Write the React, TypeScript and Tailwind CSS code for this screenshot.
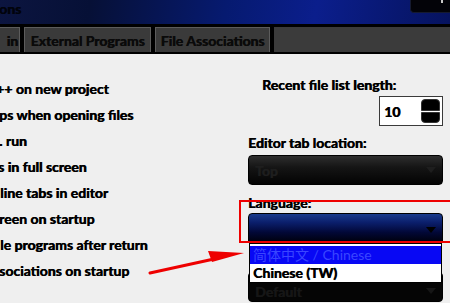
import React from "react";

const OPTIONS = [
  { text: "++ on new project", shift: "-ml-[4px]" },
  { text: "ps when opening files", shift: "-ml-[1px]" },
  { text: ". run", shift: "-ml-[1px]" },
  { text: "s in full screen", shift: "-ml-[2px]" },
  { text: "line tabs in editor", shift: "ml-0" },
  { text: "reen on startup", shift: "-ml-[1px]" },
  { text: "le programs after return", shift: "ml-0" },
  { text: "sociations on startup", shift: "-ml-[1px]" },
];

const heavy = "text-[14px] font-bold [text-shadow:0.6px_0_0_currentColor]";

function Arrow({ className }: { className?: string }) {
  return (
    <svg width="10" height="6" viewBox="0 0 10 6" className={className}>
      <path d="M0 0 L10 0 L5 6 Z" fill="currentColor" />
    </svg>
  );
}

export default function App() {
  return (
    <div className="relative w-[450px] h-[303px] overflow-hidden bg-[#efefef] text-black flex flex-col font-['Lato','Noto_Sans_CJK_SC',sans-serif]">
      {/* title bar */}
      <div className="relative h-[24px] shrink-0 bg-[linear-gradient(100deg,#0c1540_0%,#061036_20%,#061a70_50%,#0b1e8c_70%,#06135e_100%)]">
        <span className={`absolute -left-[1px] -top-[2px] text-[#01030c] ${heavy}`}>ons</span>
        <div className="absolute right-0 top-0 w-[40px] h-[13px] bg-[#030308] rounded-bl-[4px] border-l border-b border-[#151a30]">
          <span className="absolute right-[7px] top-0 w-[2px] h-[3px] bg-[#c8c8c8]" />
        </div>
      </div>

      {/* tab bar */}
      <div className="h-[30px] shrink-0 bg-black pt-[3px] pb-[2px] flex gap-[4px]">
        <div className={`w-[21px] -ml-px bg-[#3a3a3a] border-t border-r border-[#5c5c5c] flex items-center justify-end pr-[1px] text-[#0a0a0a] ${heavy}`}>
          in
        </div>
        <div className={`w-[127px] bg-[#3a3a3a] border-t border-l border-r border-[#5c5c5c] flex items-center justify-center text-[#0a0a0a] ${heavy}`}>
          External Programs
        </div>
        <div className={`w-[115px] bg-[#3a3a3a] border-t border-l border-r border-[#5c5c5c] flex items-center justify-center text-[#0a0a0a] ${heavy}`}>
          File Associations
        </div>
        <div className="flex-1 bg-[#3b3b3b]" />
      </div>

      {/* content */}
      <div className="relative flex-1 flex">
        <div className="w-[248px] shrink-0 pt-[22px] overflow-hidden">
          {OPTIONS.map((o) => (
            <div key={o.text} className={`h-[26px] leading-[26px] whitespace-nowrap text-black ${heavy} ${o.shift}`}>
              {o.text}
            </div>
          ))}
        </div>

        <div className="w-[195px] shrink-0 flex flex-col pt-[23px]">
          <div className={`pl-[14px] h-[16px] leading-[16px] whitespace-nowrap ${heavy}`}>Recent file list length:</div>
          <div className="mt-[3px] self-end w-[64px] h-[30px] bg-white border border-[#3a3a3a] flex items-center pl-[4px] pr-[2px]">
            <span className={heavy}>10</span>
            <div className="ml-auto w-[19px] h-[24px] flex flex-col gap-px">
              <div className="flex-1 bg-black rounded-t-[4px] border border-[#333]" />
              <div className="flex-1 bg-black rounded-b-[4px] border border-[#333]" />
            </div>
          </div>

          <div className={`mt-[9px] h-[16px] leading-[16px] whitespace-nowrap ${heavy}`}>Editor tab location:</div>
          <div className="mt-[4px] h-[30px] rounded-[4px] border border-black bg-[linear-gradient(180deg,#2e2e2e_0%,#151515_40%,#030303_100%)] flex items-center pl-[6px] pr-[6px]">
            <span className={`text-[#1e1e1e] ${heavy}`}>Top</span>
            <Arrow className="ml-auto text-[#1e1e1e]" />
          </div>

          <div className={`mt-[10px] h-[16px] leading-[16px] ${heavy}`}>Language:</div>
          <div className="mt-[2px] h-[30px] rounded-t-[4px] border border-black bg-[linear-gradient(180deg,#1a3b8c_0%,#0b1f6c_30%,#020838_65%,#00000c_100%)] flex items-center pl-[6px] pr-[6px]">
            <Arrow className="ml-auto mt-[4px] text-black" />
          </div>

          <div className="mt-[29px] h-[30px] rounded-[4px] border border-black bg-[#050505] flex items-center pl-[6px] pr-[6px] pt-[8px]">
            <span className={`text-[#161616] ${heavy}`}>Default</span>
            <Arrow className="ml-auto text-[#161616]" />
          </div>
        </div>

        {/* open language list */}
        <div className="absolute left-[249px] top-[189px] w-[193px] border border-black bg-white">
          <div className="h-[18px] mt-[2px] bg-[#0808f4] leading-[18px] pl-[3px] text-[14px] text-[#3a46ff] whitespace-nowrap">
            简体中文 / Chinese
          </div>
          <div className={`h-[18px] bg-white leading-[18px] pl-[3px] whitespace-nowrap ${heavy}`}>Chinese (TW)</div>
        </div>

        {/* annotation: red frame */}
        <div className="absolute left-[239px] top-[146px] -right-[10px] h-[43px] border-2 border-[#ee0000]" />
      </div>

      {/* annotation: red arrow */}
      <svg className="absolute left-0 top-0 pointer-events-none" width="450" height="303" viewBox="0 0 450 303">
        <path d="M150 273 L214 259" stroke="#ee0000" strokeWidth="3" strokeLinecap="round" />
        <path d="M208 251 L244 253 L212 262 Z" fill="#ee0000" />
      </svg>
    </div>
  );
}
